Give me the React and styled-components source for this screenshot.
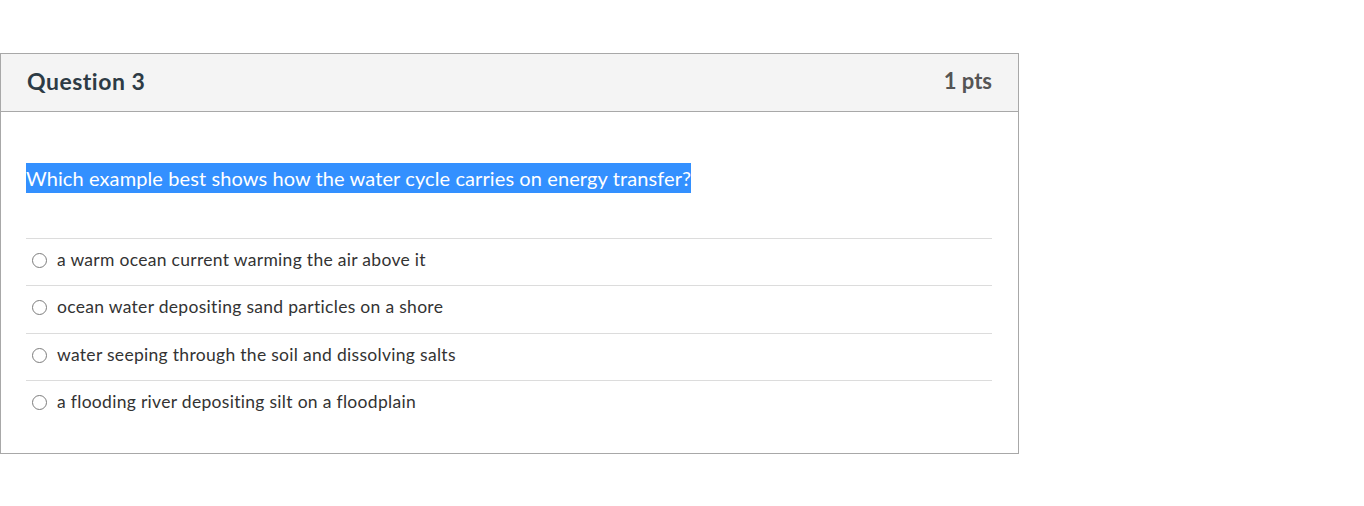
import React from "react";
import styled, { createGlobalStyle } from "styled-components";

const Global = createGlobalStyle`
  html, body { margin: 0; padding: 0; background: #fff; }
  body { font-family: Lato, "Open Sans", sans-serif; color: #2d3b45; }
`;

const Page = styled.div`
  padding-top: 53px;
  width: 1019px;
`;

const Card = styled.section`
  border: 1px solid #a8a8a8;
  background: #fff;
`;

const Header = styled.header`
  height: 58px;
  box-sizing: border-box;
  display: flex;
  align-items: center;
  justify-content: space-between;
  padding: 0 26px 4px 26px;
  background: #f4f4f4;
  border-bottom: 1px solid #a8a8a8;
`;

const Title = styled.h2`
  margin: 0;
  font-size: 23px;
  font-weight: 700;
  letter-spacing: 0.5px;
  color: #2d3b45;
`;

const Points = styled.span`
  font-size: 22px;
  font-weight: 700;
  color: #555;
`;

const Body = styled.div`
  padding: 51px 26px 26px 25px;
`;

const Prompt = styled.p`
  margin: 0 0 45px 0;
  font-size: 20px;
  line-height: 30px;
  letter-spacing: 0.1px;
`;

const Highlight = styled.span`
  display: inline-block;
  background: #3390ff;
  color: #fff;
`;

const List = styled.ul`
  list-style: none;
  margin: 0;
  padding: 0;
`;

const Row = styled.li`
  display: flex;
  align-items: center;
  gap: 10px;
  height: 47.3px;
  box-sizing: border-box;
  border-top: 1px solid #dcdcdc;
  padding: 0 0 5px 6px;
  font-size: 17.5px;
  letter-spacing: 0.3px;
  color: #333;
`;

const Radio = styled.span`
  width: 13px;
  height: 13px;
  border: 1px solid #7d7d7d;
  border-radius: 50%;
  background: #fff;
  flex: none;
  margin-top: 2px;
`;

const answers = [
  "a warm ocean current warming the air above it",
  "ocean water depositing sand particles on a shore",
  "water seeping through the soil and dissolving salts",
  "a flooding river depositing silt on a floodplain",
];

export default function App() {
  return (
    <>
      <Global />
      <Page>
        <Card>
          <Header>
            <Title>Question 3</Title>
            <Points>1 pts</Points>
          </Header>
          <Body>
            <Prompt>
              <Highlight>
                Which example best shows how the water cycle carries on energy transfer?
              </Highlight>
            </Prompt>
            <List>
              {answers.map((a) => (
                <Row key={a}>
                  <Radio />
                  {a}
                </Row>
              ))}
            </List>
          </Body>
        </Card>
      </Page>
    </>
  );
}
